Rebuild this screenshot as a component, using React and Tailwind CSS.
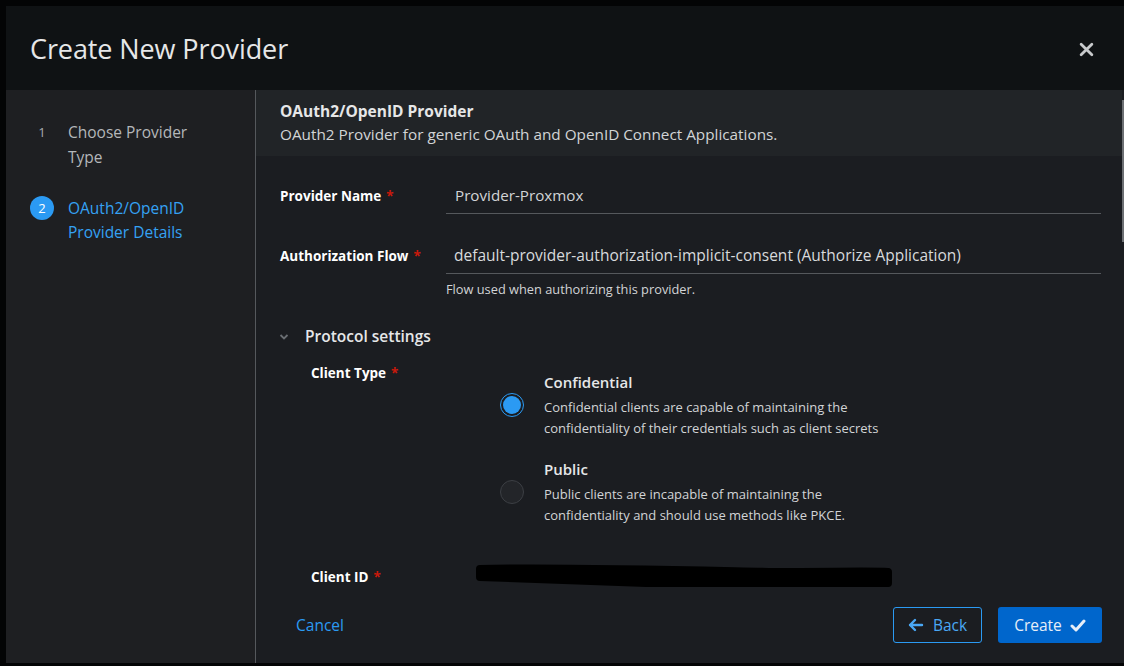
import React from "react";

const font = { fontFamily: '"Open Sans", "Liberation Sans", sans-serif' };

function Req() {
  return <span className="ml-[5px] text-[#c9190b]">*</span>;
}

function Radio({ checked }) {
  return checked ? (
    <div className="w-6 h-6 rounded-full border border-[#2b9af3] flex items-center justify-center shrink-0">
      <div className="w-[18px] h-[18px] rounded-full bg-[#2b9af3] ring-1 ring-[#1b1d21]" />
    </div>
  ) : (
    <div className="w-6 h-6 rounded-full border border-[#3c3f44] bg-[#232529] shrink-0" />
  );
}

export default function App() {
  return (
    <div className="w-[1124px] h-[666px] bg-[#030405] pt-[6px] pl-[6px] overflow-hidden" style={font}>
      <div className="w-[1118px] h-[657px] flex flex-col bg-[#1e1f22]">
        {/* Header */}
        <div className="h-[84px] bg-[#0f1214] flex items-center justify-between pl-[24px] pr-[30px] shrink-0">
          <div className="text-[27px] text-[#e6e7e8] tracking-[-0.1px] mt-[2px]">Create New Provider</div>
          <svg width="15" height="15" viewBox="0 0 14 14" className="mt-[3px]">
            <path d="M2 2 L12 12 M12 2 L2 12" stroke="#c8cacc" strokeWidth="2.6" strokeLinecap="round" />
          </svg>
        </div>
        {/* Body */}
        <div className="flex flex-1 min-h-0">
          {/* Sidebar */}
          <div className="w-[250px] shrink-0 bg-[#1e1f22] border-r border-[#55585c] pt-[30px] pl-[24px]">
            <div className="flex text-[15.5px] leading-[25px]">
              <div className="w-[24px] h-[24px] flex items-center justify-center text-[#a8abaf] text-[13px] mr-[14px]">1</div>
              <div className="text-[#b4b7ba]">Choose Provider<br />Type</div>
            </div>
            <div className="flex text-[15.5px] leading-[24px] mt-[26px]">
              <div className="w-[24px] h-[24px] rounded-full bg-[#2b9af3] flex items-center justify-center text-white text-[13px] mr-[14px]">2</div>
              <div className="text-[#35a2f4]">OAuth2/OpenID<br />Provider Details</div>
            </div>
          </div>
          {/* Main */}
          <div className="flex-1 flex min-w-0 bg-[#1b1d21]">
            <div className="flex-1 flex flex-col min-w-0">
              <div className="flex-1 min-h-0 overflow-hidden">
                <div className="bg-[#212427] pl-[24px] pt-[10px] pb-[10px]">
                  <div className="text-[15.5px] leading-[22px] font-bold text-[#e6e7e8]">OAuth2/OpenID Provider</div>
                  <div className="text-[15.3px] leading-[24px] text-[#d2d4d6]">OAuth2 Provider for generic OAuth and OpenID Connect Applications.</div>
                </div>
                <div className="pl-[24px] pr-[21px] pt-[22px]">
                  {/* Provider Name */}
                  <div className="flex items-start">
                    <div className="w-[166px] shrink-0 h-[36px] flex items-center text-[13.5px] font-bold text-white">Provider Name<Req /></div>
                    <div className="flex-1 h-[36px] border-b border-[#55585c] flex items-center pl-[9px] text-[15.2px] text-[#d2d4d6]">Provider-Proxmox</div>
                  </div>
                  {/* Authorization Flow */}
                  <div className="flex items-start mt-[24px]">
                    <div className="w-[166px] shrink-0 h-[36px] flex items-center text-[13.5px] font-bold text-white">Authorization Flow<Req /></div>
                    <div className="flex-1">
                      <div className="h-[36px] border-b border-[#55585c] flex items-center pl-[8px] text-[15.5px] text-[#d8dadc]">default-provider-authorization-implicit-consent (Authorize Application)</div>
                      <div className="mt-[6px] text-[12.8px] leading-[18px] text-[#d2d4d6]">Flow used when authorizing this provider.</div>
                    </div>
                  </div>
                  {/* Protocol settings */}
                  <div className="flex items-center mt-[27px] h-[24px]">
                    <svg width="10" height="8" viewBox="0 0 10 8" className="ml-[-1px] mr-[16px]">
                      <path d="M1.5 2 L5 5.5 L8.5 2" stroke="#6a6e73" strokeWidth="1.8" fill="none" />
                    </svg>
                    <div className="text-[15.5px] font-semibold text-[#e6e7e8]">Protocol settings</div>
                  </div>
                  <div className="pl-[31px]">
                    {/* Client Type */}
                    <div className="flex items-start mt-[14px]">
                      <div className="w-[189px] shrink-0 leading-[20px] text-[13.5px] font-bold text-white">Client Type<Req /></div>
                      <div className="pt-[8px] flex flex-col gap-[19px]">
                        <div className="flex items-center">
                          <Radio checked />
                          <div className="ml-[20px]">
                            <div className="text-[15px] leading-[22px] font-semibold text-[#e6e7e8]">Confidential</div>
                            <div className="text-[13px] leading-[21px] text-[#d2d4d6] mt-[4px]">Confidential clients are capable of maintaining the<br />confidentiality of their credentials such as client secrets</div>
                          </div>
                        </div>
                        <div className="flex items-center">
                          <Radio />
                          <div className="ml-[20px]">
                            <div className="text-[15px] leading-[22px] font-semibold text-[#e6e7e8]">Public</div>
                            <div className="text-[13px] leading-[21px] text-[#d2d4d6] mt-[4px]">Public clients are incapable of maintaining the<br />confidentiality and should use methods like PKCE.</div>
                          </div>
                        </div>
                      </div>
                    </div>
                    {/* Client ID */}
                    <div className="flex items-center mt-[40px] h-[22px]">
                      <div className="w-[163px] shrink-0 text-[13.5px] font-bold text-white">Client ID<Req /></div>
                      <svg width="422" height="26" viewBox="0 0 422 26" className="shrink-0">
                        <path d="M6 5 C 80 3, 200 6, 300 8 C 360 8, 400 7, 414 8 L 414 19 C 380 21, 300 22, 200 20 C 130 17, 60 15, 6 13 Z" fill="#000" stroke="#000" strokeWidth="8" strokeLinejoin="round" />
                      </svg>
                    </div>
                  </div>
                </div>
              </div>
              {/* Footer */}
              <div className="h-[76px] shrink-0 flex items-center pl-[40px] pr-[20px]">
                <div className="text-[15.5px] text-[#2b9af3] mt-[2px]">Cancel</div>
                <div className="ml-auto flex gap-[16px]">
                  <div className="h-[36px] w-[89px] border border-[#2b9af3] rounded-[3px] flex items-center justify-center gap-[9px] text-[15.5px] text-[#4aa8f5]">
                    <svg width="16" height="14" viewBox="0 0 16 14">
                      <path d="M7 2 L2 7 L7 12 M2 7 L14 7" stroke="#4aa8f5" strokeWidth="2.4" fill="none" strokeLinecap="round" strokeLinejoin="round" />
                    </svg>
                    <span className="mt-[2px]">Back</span>
                  </div>
                  <div className="h-[36px] w-[104px] bg-[#0066cc] rounded-[3px] flex items-center justify-center gap-[8px] text-[15.5px] text-[#e6eef8]">
                    <span className="mt-[2px]">Create</span>
                    <svg width="16" height="13" viewBox="0 0 16 13">
                      <path d="M2 7 L6 11 L14 2" stroke="#e6eef8" strokeWidth="3" fill="none" strokeLinecap="round" strokeLinejoin="round" />
                    </svg>
                  </div>
                </div>
              </div>
            </div>
            {/* Scrollbar */}
            <div className="w-[2px] shrink-0 relative">
              <div className="absolute top-[10px] h-[142px] w-[2px] bg-[#6c6f73]" />
            </div>
          </div>
        </div>
      </div>
    </div>
  );
}
